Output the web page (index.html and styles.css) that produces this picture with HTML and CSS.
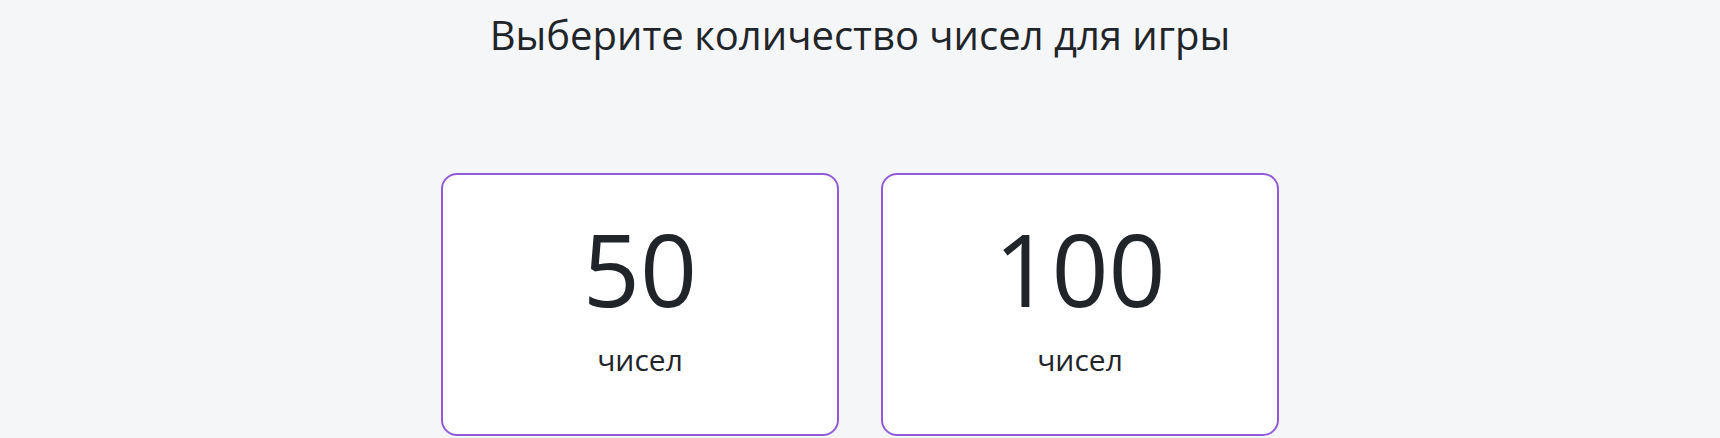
FILE: index.html
```html
<!DOCTYPE html>
<html lang="ru">

<head>
    <meta charset="UTF-8">
    <meta name="viewport" content="width=device-width, initial-scale=1.0">
    <title>Выбор игры</title>
    <link rel="stylesheet" href="styles.css">
</head>

<body>
    <div id="gameBox">
        <h1 class="title">Выберите количество чисел для игры</h1>
        <div class="choices">
            <div class="choice">
                <div class="count">50</div>
                <div class="label">чисел</div>
            </div>
            <div class="choice">
                <div class="count">100</div>
                <div class="label">чисел</div>
            </div>
        </div>
    </div>
</body>

</html>
```

FILE: styles.css
```css
* {
    box-sizing: border-box;
    margin: 0;
    padding: 0;
}
body {
    background-color: #f5f6f8;
    color: #212529;
    font-family: "Open Sans", "Noto Sans", sans-serif;
}
#gameBox {
    padding-top: 11px;
}
.title {
    text-align: center;
    font-size: 40px;
    font-weight: 400;
    line-height: 1.2;
}
.choices {
    display: flex;
    justify-content: center;
    gap: 42px;
    margin-top: 114px;
}
.choice {
    width: 398px;
    height: 263px;
    padding-top: 33px;
    background-color: #fff;
    border: solid 2px #8f5bd9;
    border-radius: 16px;
    text-align: center;
    cursor: pointer;
}
.count {
    font-size: 100px;
    line-height: 120px;
}
.label {
    margin-top: 9px;
    font-size: 30px;
    line-height: 1.5;
}
```
